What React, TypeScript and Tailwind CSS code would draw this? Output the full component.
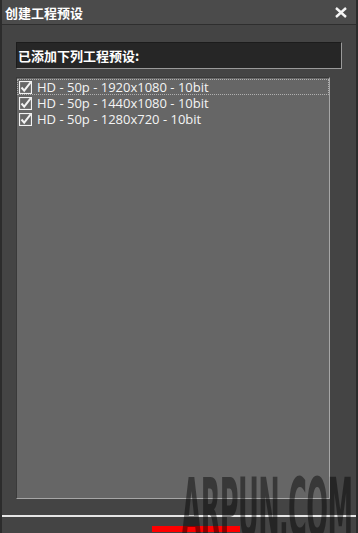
import React from "react";

const presets = [
  "HD - 50p - 1920x1080 - 10bit",
  "HD - 50p - 1440x1080 - 10bit",
  "HD - 50p - 1280x720 - 10bit",
];

function CheckIcon() {
  return (
    <svg width="13" height="13" viewBox="0 0 13 13" className="shrink-0">
      <rect x="0.5" y="0.5" width="12" height="12" fill="none" stroke="#f2f2f2" strokeWidth="1.2" />
      <path d="M2.5 6.5 L5.2 9.6 L11.8 1.2" fill="none" stroke="#f2f2f2" strokeWidth="2" />
    </svg>
  );
}

export default function App() {
  return (
    <div
      className="relative h-[533px] w-[358px] overflow-hidden bg-[#444444] text-white"
      style={{ fontFamily: "'Noto Sans CJK SC', 'Liberation Sans', sans-serif" }}
    >
      <div className="flex h-full flex-col border-l-2 border-r-2 border-[#2c2c2c]">
        {/* title bar */}
        <div className="flex h-[25px] shrink-0 items-center justify-between border-b border-[#2e2e2e] bg-[#4b4b4b] pl-[3px] pr-[9px]">
          <span className="text-[13px] font-bold leading-none">创建工程预设</span>
          <svg width="12" height="11" viewBox="0 0 12 11">
            <path d="M1 1 L11 10 M11 1 L1 10" stroke="#f4f4f4" strokeWidth="2.4" />
          </svg>
        </div>

        {/* body */}
        <div className="flex flex-1 flex-col pl-[14px] pr-[14px] pt-[17px]">
          <div className="flex h-[27px] items-center border border-[#9a9a9a] border-l-[#1c1c1c] border-t-[#1c1c1c] bg-[#262626] pl-[1px]">
            <span className="text-[13px] font-bold leading-none">已添加下列工程预设:</span>
          </div>

          <div className="mr-[12px] mt-[8px] h-[422px] border border-[#a6a6a6] border-l-[#3a3a3a] border-t-[#3a3a3a] bg-[#666666] pt-[1px]">
            {presets.map((p, i) => (
              <div
                key={p}
                className={
                  "flex h-[16px] items-center gap-[5px] pl-[1px] " +
                  (i === 0 ? "border border-dotted border-[#b0b0b0]" : "border border-transparent")
                }
              >
                <CheckIcon />
                <span
                  className="text-[13px] leading-[14px] text-[#f4f4f4]"
                  style={{ fontFamily: "'Open Sans', 'Liberation Sans', sans-serif" }}
                >
                  {p}
                </span>
              </div>
            ))}
          </div>
        </div>

        {/* bottom */}
        <div className="h-[18px] shrink-0 border-t-2 border-[#e6e6e6] pt-[9px]">
          <div className="ml-[150px] h-[6px] w-[88px] bg-[#ff0000]" />
        </div>
      </div>

      {/* watermark */}
      <div
        className="pointer-events-none absolute bottom-[-18px] right-[6px] text-[84px] font-bold leading-none tracking-[-2px] text-black/45"
        style={{ fontFamily: "'DejaVu Sans Condensed', 'DejaVu Sans', sans-serif", transform: "scaleX(0.34)", transformOrigin: "right bottom" }}
      >
        ARPUN.COM
      </div>
    </div>
  );
}
